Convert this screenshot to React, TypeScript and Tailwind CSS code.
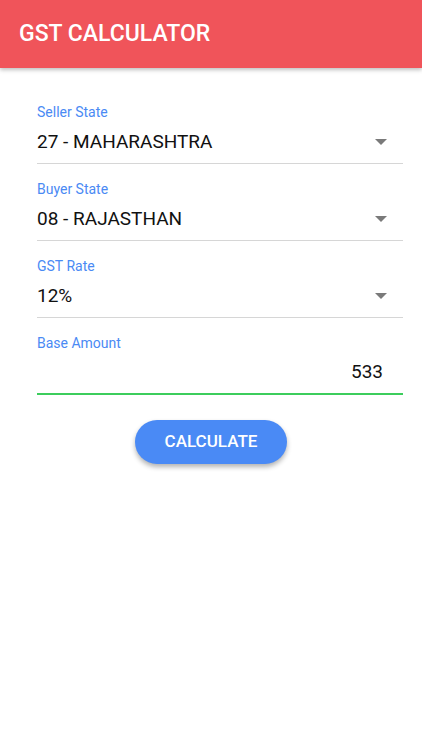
import React from "react";

function Caret() {
  return (
    <svg width="12" height="6" viewBox="0 0 12 6" className="shrink-0">
      <path d="M0 0 L12 0 L6 6 Z" fill="#7a7a7a" />
    </svg>
  );
}

function SelectField({ label, value }: { label: string; value: string }) {
  return (
    <div className="flex flex-col">
      <div className="text-[14px] leading-[18px] text-[#4a8af4]">{label}</div>
      <div className="flex h-[43px] items-center justify-between border-b border-[#d6d6d6] pr-[16px]">
        <span className="text-[19px] text-[#111]">{value}</span>
        <Caret />
      </div>
    </div>
  );
}

export default function App() {
  return (
    <div
      className="min-h-[750px] w-[422px] bg-white"
      style={{ fontFamily: "Roboto, 'Noto Sans', sans-serif" }}
    >
      <header className="flex h-[68px] items-center bg-[#f0545a] pl-[19px] shadow-[0_2px_4px_rgba(0,0,0,0.25)]">
        <h1 className="text-[23px] font-medium text-white">GST CALCULATOR</h1>
      </header>
      <main className="flex flex-col pt-[35px]">
        <div className="ml-[37px] mr-[19px] flex flex-col gap-[16px]">
          <SelectField label="Seller State" value="27 - MAHARASHTRA" />
          <SelectField label="Buyer State" value="08 - RAJASTHAN" />
          <SelectField label="GST Rate" value="12%" />
          <div className="flex flex-col">
            <div className="text-[14px] leading-[18px] text-[#4a8af4]">Base Amount</div>
            <div className="flex h-[43px] items-center justify-end border-b-2 border-[#3ccd5c] pr-[20px]">
              <span className="text-[19px] text-[#111]">533</span>
            </div>
          </div>
        </div>
        <div className="mt-[25px] flex justify-center">
          <button className="h-[44px] w-[152px] rounded-full bg-[#4a8af5] text-[17px] font-medium text-white shadow-[0_3px_5px_rgba(0,0,0,0.3)]">
            CALCULATE
          </button>
        </div>
      </main>
    </div>
  );
}
